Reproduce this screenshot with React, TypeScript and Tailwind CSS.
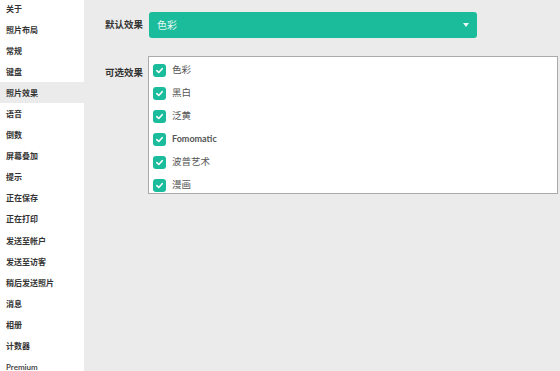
import React from 'react';

const navItems = [
  '关于',
  '照片布局',
  '常规',
  '键盘',
  '照片效果',
  '语音',
  '倒数',
  '屏幕叠加',
  '提示',
  '正在保存',
  '正在打印',
  '发送至帐户',
  '发送至访客',
  '稍后发送照片',
  '消息',
  '相册',
  '计数器',
  'Premium',
];

const effects = ['色彩', '黑白', '泛黄', 'Fomomatic', '波普艺术', '漫画'];

const font = { fontFamily: 'Lato, "Noto Sans CJK SC", sans-serif' };

const Check = () => (
  <span className="w-[13px] h-[13px] rounded-[3px] bg-[#1abc9c] flex items-center justify-center flex-shrink-0">
    <svg width="9" height="9" viewBox="0 0 10 10" fill="none">
      <path d="M2 5.2 L4.2 7.2 L8 3" stroke="white" strokeWidth="1.8" strokeLinecap="round" strokeLinejoin="round" />
    </svg>
  </span>
);

export default function App() {
  return (
    <div className="w-[560px] h-[371px] overflow-hidden flex bg-[#ebebeb]" style={font}>
      {/* Sidebar */}
      <div className="w-[84px] flex-shrink-0 bg-white overflow-hidden">
        <div className="-mt-[2px]">
          {navItems.map((item) => (
            <div
              key={item}
              className={`h-[21.1px] flex items-center pl-[6px] text-[8px] font-bold text-[#333] ${
                item === '照片效果' ? 'bg-[#ebebeb]' : ''
              } ${item === 'Premium' ? 'font-semibold' : ''}`}
            >
              {item}
            </div>
          ))}
        </div>
      </div>

      {/* Content */}
      <div className="flex-1 pl-[21px] pt-[12px]">
        <div className="flex items-center">
          <div className="w-[44px] text-[9.5px] font-bold text-[#333]">默认效果</div>
          <div className="w-[328px] h-[26px] rounded-[3px] bg-[#1abc9c] flex items-center justify-between pl-[8px] pr-[8px]">
            <span className="text-[10px] text-[#e8f8f4]">色彩</span>
            <svg width="6" height="4" viewBox="0 0 6 4">
              <path d="M0 0 L6 0 L3 4 Z" fill="#e8f8f4" />
            </svg>
          </div>
        </div>

        <div className="flex items-start mt-[18px]">
          <div className="w-[43px] text-[9.5px] font-bold text-[#333] pt-[10px]">可选效果</div>
          <div className="w-[410px] h-[138px] overflow-hidden bg-white border border-[#aaa] pl-[4px] pt-[1.5px]">
            {effects.map((e) => (
              <div key={e} className="h-[23px] flex items-center gap-[6px]">
                <Check />
                <span className={`text-[9.5px] text-[#555] ${e === 'Fomomatic' ? 'font-bold text-[9px]' : ''}`}>{e}</span>
              </div>
            ))}
          </div>
        </div>
      </div>
    </div>
  );
}
